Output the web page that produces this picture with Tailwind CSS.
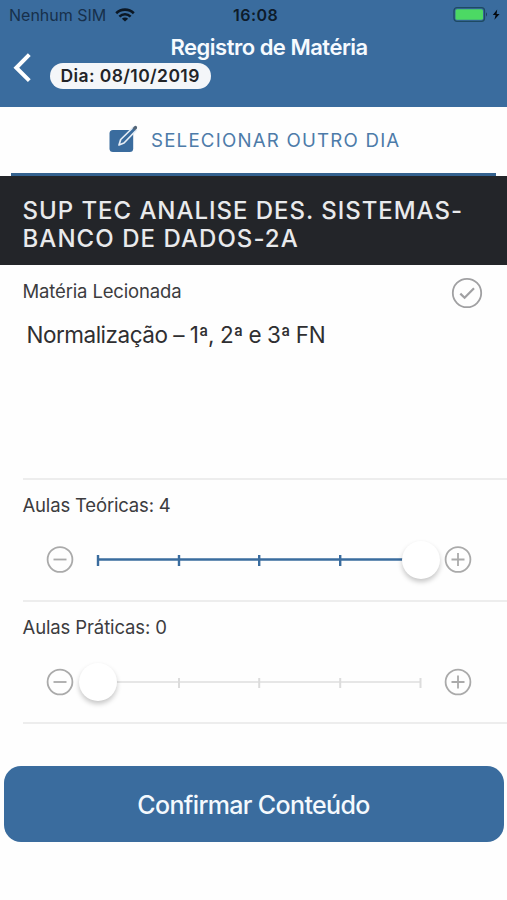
<!DOCTYPE html>
<html lang="pt-BR">
<head>
<meta charset="utf-8">
<title>Registro de Matéria</title>
<script src="https://cdn.jsdelivr.net/npm/@tailwindcss/browser@4"></script>
</head>
<body class="bg-white">
<div class="w-[507px] h-[900px] overflow-hidden bg-[#fefefe] font-[Inter,sans-serif] text-[#3c3c3e] whitespace-nowrap flex flex-col">
  <header class="h-[107px] shrink-0 bg-[#3a6c9e]">
    <div class="relative h-[30px] flex items-center pl-[9px] text-[16px] leading-[30px] text-[#17304b]">
      <span>Nenhum SIM</span>
      <svg class="ml-[9px] -mt-[1px]" width="20" height="14" viewBox="0 0 20 14" fill="none" stroke="#0b1724" stroke-width="2.6"><path d="M1.2 5.2a12.6 12.6 0 0 1 17.6 0M4.4 8.6a8 8 0 0 1 11.2 0"/><path d="M10 13.6L6.9 10.7a4.4 4.4 0 0 1 6.2 0z" fill="#0b1724" stroke="none"/></svg>
      <span class="absolute left-[233px] font-semibold tracking-[0.45px] text-[#0d1b2a]">16:08</span>
      <svg class="absolute left-[453px] top-[6px]" width="48" height="17" viewBox="0 0 48 17"><rect x="1" y="1.7" width="30.5" height="13.6" rx="3" fill="none" stroke="#1e4a63" stroke-width="1.3"/><rect x="2.5" y="3.2" width="27.5" height="10.6" rx="1.6" fill="#4cd964"/><path d="M33 6.3q2 2 0 4.4z" fill="#1e3f5c"/><path d="M44.2 3.6L39.8 9h2.8l-1.2 4.8L46.6 8h-3z" fill="#050a10"/></svg>
    </div>
    <div class="flex">
      <svg class="mt-[21.5px] ml-[12px] shrink-0" width="20" height="32" viewBox="0 0 20 32" fill="none" stroke="#fff" stroke-width="4"><path d="M17.3 2.6L4.3 15.8L17.3 28.6"/></svg>
      <div class="ml-[18px]">
        <h1 class="h-[32.5px] ml-[120.5px] leading-[34px] text-[22px] font-semibold text-[#f6fafe] tracking-[-0.5px]">Registro de Matéria</h1>
        <div class="w-[161px] h-[26.5px] rounded-full bg-[#f4f6f9] text-[#222428] text-[17.5px] leading-[25px] font-semibold tracking-[0.4px] pl-[10.5px]">Dia: 08/10/2019</div>
      </div>
    </div>
  </header>
  <div class="h-[68.5px] shrink-0 mx-[11px] border-b-[3px] border-[#34628f] flex items-center text-[#4d7ba9]">
    <svg class="ml-[97px] shrink-0" width="32" height="30" viewBox="0 0 32 30"><rect x="1.5" y="5" width="23.7" height="22" rx="3.5" fill="#3a6c9e"/><path d="M11 20L12.7 14.5L25.5 2L28.5 5L16 18z" fill="#3a6c9e" stroke="#e6edf5" stroke-width="1.7" stroke-linejoin="round"/><path d="M24.5 3.2L26.7 1.1q1.2-.6 2 .3t.2 2L26.9 5.5z" fill="#526578"/></svg>
    <span class="ml-[11px] pt-[2.5px] text-[18.7px] tracking-[1.2px]">SELECIONAR OUTRO DIA</span>
  </div>
  <div class="h-[89.5px] shrink-0 bg-[#232529] pl-[22.5px] pt-[21.2px] text-[24px] leading-[28.5px] font-medium text-[#e9eaec] tracking-[0.96px]">SUP TEC ANALISE DES. SISTEMAS-<br><span class="tracking-[1.05px]">BANCO DE DADOS-2A</span></div>
  <section class="h-[215px] shrink-0 ml-[22.5px] border-b-2 border-[#ededed]">
    <div class="h-[53px] flex items-center justify-between pr-[24px] text-[18.5px] tracking-[-0.15px]">
      <span>Matéria Lecionada</span>
      <svg class="mt-[3px]" width="32" height="32" viewBox="0 0 32 32" fill="none" stroke="#a0a0a2"><circle cx="16" cy="16" r="14.2" stroke-width="1.8"/><path d="M9.3 16.6L13.6 20.8L23 11.3" stroke-width="2.2"/></svg>
    </div>
    <div class="pl-[4px] text-[22.5px] leading-[33px] tracking-[-0.49px] text-[#2f2f31]">Normalização – 1<span class="font-[Roboto]">ª</span>, 2<span class="font-[Roboto]">ª</span> e 3<span class="font-[Roboto]">ª</span> FN</div>
  </section>
  <section class="h-[122px] shrink-0 ml-[22.5px] border-b-2 border-[#ededed]">
    <div class="h-[51.5px] leading-[50px] text-[18.5px] tracking-[-0.17px]">Aulas Teóricas: 4</div>
    <div class="pl-[23.5px] h-[56px] flex items-center">
      <svg class="shrink-0" width="28" height="28" viewBox="0 0 28 28" fill="none" stroke="#aaa" stroke-width="1.8"><circle cx="14" cy="13.5" r="12.4"/><path d="M7.5 13.5H20.5"/></svg>
      <svg class="shrink-0" width="371" height="56" viewBox="74 0 371 56"><path d="M97 27.5H421" stroke="#3a6c9e" stroke-width="2.6"/><path d="M98 23V34M179 23V34M259.2 23V34M340.2 23V34" stroke="#3a6c9e" stroke-width="2.4"/></svg>
      <div class="w-[38px] h-[38px] shrink-0 -ml-[43.5px] rounded-full bg-white shadow-[0_3px_5px_rgba(0,0,0,0.22)]"></div>
      <svg class="ml-[4.5px] shrink-0" width="28" height="28" viewBox="0 0 28 28" fill="none" stroke="#aaa" stroke-width="1.8"><circle cx="14" cy="13.5" r="12.4"/><path d="M7.5 13.5H20.5M14 7V20"/></svg>
    </div>
  </section>
  <section class="h-[122px] shrink-0 ml-[22.5px] border-b-2 border-[#ededed]">
    <div class="h-[51.5px] leading-[50px] text-[18.5px] tracking-[-0.12px]">Aulas Práticas: 0</div>
    <div class="pl-[23.5px] h-[56px] flex items-center">
      <svg class="shrink-0" width="28" height="28" viewBox="0 0 28 28" fill="none" stroke="#aaa" stroke-width="1.8"><circle cx="14" cy="14" r="12.4"/><path d="M7.5 14H20.5"/></svg>
      <svg class="shrink-0" width="371" height="56" viewBox="74 0 371 56"><path d="M98 28H421" stroke="#e6e6e6" stroke-width="2.2"/><path d="M179 24V34M259.2 24V34M340.2 24V34M420.5 24V34" stroke="#dcdcdc" stroke-width="2"/></svg>
      <div class="w-[38px] h-[38px] shrink-0 -ml-[366px] rounded-full bg-white shadow-[0_3px_5px_rgba(0,0,0,0.22)]"></div>
      <svg class="ml-[327px] shrink-0" width="28" height="28" viewBox="0 0 28 28" fill="none" stroke="#aaa" stroke-width="1.8"><circle cx="14" cy="14" r="12.4"/><path d="M7.5 14H20.5M14 7.5V20.5"/></svg>
    </div>
  </section>
  <button class="mt-[42.4px] mx-[3.5px] h-[75.5px] pt-[2.5px] shrink-0 rounded-[17px] bg-[#3a6c9e] text-[#f4f9fd] text-[25px] font-medium tracking-[-0.65px]">Confirmar Conteúdo</button>
</div>
</body>
</html>
